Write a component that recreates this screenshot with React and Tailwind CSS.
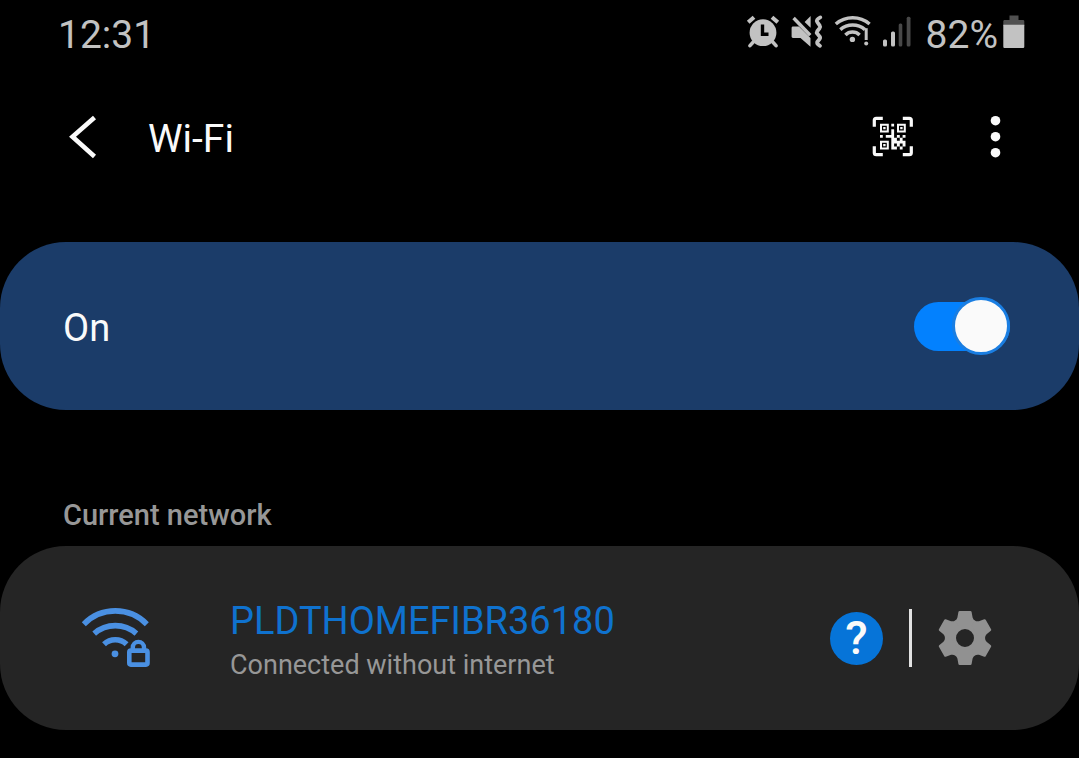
import { useState } from 'react';

const AlarmIcon = () => (
  <svg width="34" height="38" viewBox="0 0 34 38" fill="none" stroke="#c2c2c2" aria-hidden="true">
    <circle cx="17" cy="18.7" r="13.4" fill="#c2c2c2" stroke="none" />
    <path d="M2.2 8.3L8 3.2M26 3.2L31.8 8.3" strokeWidth="4" />
    <path d="M4 31.6L7.5 27.8M30 31.6L26.5 27.8" strokeWidth="3.6" strokeLinecap="round" />
    <path d="M16.5 10.5V20.2H22.5" stroke="#000" strokeWidth="3.4" />
  </svg>
);

const VibrateIcon = () => (
  <svg width="34" height="38" viewBox="0 0 34 38" fill="none" stroke="#c2c2c2" aria-hidden="true">
    <path d="M3 12.5H9L20.5 24V32.8L10.5 24H3C2.2 24 1.6 23.4 1.6 22.6V13.9C1.6 13.1 2.2 12.5 3 12.5Z" fill="#c2c2c2" stroke="none" />
    <path d="M14.6 8L20.6 2V13.8Z" fill="#c2c2c2" stroke="none" />
    <path d="M3.6 4L20.2 21.2" strokeWidth="3.4" />
    <path
      d="M30.3 3.4Q25.6 5.7 27.2 8L29.6 11.3Q30.6 12.8 29.6 14.2L27.2 17.2Q26.4 18.4 27.2 19.6L29.6 22.4Q30.6 23.8 29.6 25L27.2 28Q26.6 29.8 30 31.8"
      strokeWidth="3.8"
      strokeLinejoin="round"
      strokeLinecap="round"
    />
  </svg>
);

const WifiStatusIcon = () => (
  <svg width="38" height="38" viewBox="0 0 38 38" fill="none" stroke="#c2c2c2" strokeWidth="3.5" aria-hidden="true">
    <path d="M1.8 10A26 26 0 0 1 35.6 10" />
    <path d="M6.3 15.6A19 19 0 0 1 31 15.6" />
    <path d="M11.4 21A10 10 0 0 1 25.6 21" />
    <circle cx="18.4" cy="25.4" r="2.7" fill="#c2c2c2" stroke="none" />
    <path d="M32.2 14.2V26" strokeWidth="3" />
    <circle cx="32.2" cy="29.6" r="2" fill="#c2c2c2" stroke="none" />
  </svg>
);

const SignalIcon = () => (
  <svg width="30" height="38" viewBox="0 0 30 38" fill="#c2c2c2" aria-hidden="true">
    <rect x="1" y="25.5" width="4" height="7" rx="1.5" />
    <rect x="9" y="17.5" width="4" height="15" rx="1.5" />
    <rect x="16.7" y="9.5" width="3.6" height="23" rx="1.5" fill="#484848" />
    <rect x="24.7" y="2.7" width="3.8" height="29.8" rx="1.5" fill="#484848" />
  </svg>
);

const BatteryIcon = () => (
  <svg width="22" height="38" viewBox="0 0 22 38" aria-hidden="true">
    <path d="M6.5 1.5H15.5V6H20C20.8 6 21.3 6.6 21.3 7.3V12H.3V7.3C.3 6.6 .8 6 1.6 6H6.5Z" fill="#505050" />
    <path d="M.3 10.8H21.3V32.4C21.3 33.3 20.7 34 19.8 34H1.8C.9 34 .3 33.3 .3 32.4Z" fill="#c2c2c2" />
  </svg>
);

const QrScanIcon = () => (
  <svg width="44" height="44" viewBox="0 0 44 44" fill="none" stroke="#fafafa" aria-hidden="true">
    <path
      d="M3.3 11.8V5.3A2 2 0 0 1 5.3 3.3H11.8M31.8 3.3H38.3A2 2 0 0 1 40.3 5.3V11.8M40.3 31.2V37.7A2 2 0 0 1 38.3 39.7H31.8M11.8 39.7H5.3A2 2 0 0 1 3.3 37.7V31.2"
      strokeWidth="3.2"
    />
    <path d="M10 9.8H16.8V16.4H10ZM27 9.8H33.8V16.4H27ZM10 26.8H16.8V33.4H10Z" strokeWidth="2" />
    <path
      d="M12.2 12h2.4v2.2h-2.4zM29.2 12h2.4v2.2h-2.4zM12.2 29h2.4v2.2h-2.4zM20.3 8.8h2.8v2.8h-2.8zM20.3 14.2h2.8v5.8h-2.8zM9 20h2.8v2.8h-2.8zM14.8 20h5.6v2.8h-5.6zM20.3 20h2.8v5.8h-2.8zM20.3 28h2.8v6.4h-2.8zM23 22.8h2.9v2.9h-2.9zM25.9 20h2.9v2.8h-2.9zM31.6 20h2.9v2.8h-2.9zM28.8 22.8h2.8v2.9h-2.8zM20.3 25.7h8.5v2.9h-8.5zM28.8 25.7h5.7v2.9h-5.7zM25.9 28.5h2.9v2.9h-2.9zM23 31.4h2.9v3h-2.9zM28.8 31.4h2.8v3h-2.8zM31.6 28.5h2.9v2.9h-2.9z"
      fill="#fafafa"
      stroke="none"
    />
  </svg>
);

const SecureWifiIcon = () => (
  <svg
    width="72"
    height="66"
    viewBox="0 0 72 66"
    fill="none"
    stroke="#4a90e2"
    strokeWidth="5.6"
    className="shrink-0"
    aria-hidden="true"
  >
    <path d="M3.8 19.2A44 44 0 0 1 66.8 19.2" />
    <path d="M14.2 28.6A32 32 0 0 1 56.4 28.6" />
    <path d="M24 39.2A16.5 16.5 0 0 1 46.6 39.2" />
    <circle cx="35" cy="48.8" r="3.4" fill="#4a90e2" stroke="none" />
    <rect x="49.3" y="45.6" width="18.2" height="14" rx="1.5" strokeWidth="4.6" />
    <path d="M52.8 45V42.5A5.6 5.6 0 0 1 64 42.5V45" strokeWidth="4.4" />
  </svg>
);

const GearIcon = () => (
  <svg width="54" height="56" viewBox="-27 -28 54 56" fill="#919191" aria-hidden="true">
    <circle r="14.2" fill="none" stroke="#919191" strokeWidth="10.4" />
    {[0, 60, 120, 180, 240, 300].map((angle) => (
      <path
        key={angle}
        d="M-5.4 -27H5.4Q6.4 -27 6.6 -26L7.6 -20.5Q8 -18.5 10.5 -17L6 -12H-6L-10.5 -17Q-8 -18.5 -7.6 -20.5L-6.6 -26Q-6.4 -27 -5.4 -27Z"
        transform={`rotate(${angle})`}
      />
    ))}
  </svg>
);

const StatusBar = () => (
  <div className="flex h-[66px] items-center justify-between pl-[58px] pr-[54px] text-[39px] leading-[48px] text-[#c2c2c2]">
    <span className="pt-[3px]">12:31</span>
    <div className="flex items-center gap-[14px]">
      <div className="flex items-center gap-[10px]">
        <AlarmIcon />
        <VibrateIcon />
        <WifiStatusIcon />
        <SignalIcon />
      </div>
      <div className="flex items-center gap-[5px]">
        <span className="pt-[3px]">82%</span>
        <BatteryIcon />
      </div>
    </div>
  </div>
);

const Toolbar = () => (
  <header className="flex h-[142px] items-center pl-[68px] pr-[77px]">
    <button type="button" aria-label="Back">
      <svg width="30" height="44" viewBox="0 0 30 44" fill="none" stroke="#fafafa" strokeWidth="4.6">
        <path d="M26.5 2.5L4.5 21.8L26.5 41.5" />
      </svg>
    </button>
    <h1 className="ml-[50px] flex-1 pt-[3px] text-[39px] leading-[48px] text-[#fafafa]">Wi-Fi</h1>
    <div className="flex items-center gap-[75px]">
      <button type="button" aria-label="Scan QR code">
        <QrScanIcon />
      </button>
      <button type="button" aria-label="More options">
        <svg width="12" height="44" viewBox="0 0 12 44" fill="#fafafa">
          <circle cx="5.5" cy="5.7" r="4.8" />
          <circle cx="5.5" cy="21.7" r="4.8" />
          <circle cx="5.5" cy="37.7" r="4.8" />
        </svg>
      </button>
    </div>
  </header>
);

const App = () => {
  const [enabled, setEnabled] = useState(true);

  return (
    <div className="min-h-screen bg-black font-[Roboto,sans-serif]">
      <StatusBar />
      <Toolbar />

      <main className="mt-[34px]">
        <div className="flex h-[168px] items-center justify-between rounded-[66px] bg-[#1b3c69] pl-[63px] pr-[69px]">
          <label htmlFor="wifi-switch" className="pt-[3px] text-[38px] leading-[48px] text-[#fafafa]">
            {enabled ? 'On' : 'Off'}
          </label>
          <input
            id="wifi-switch"
            type="checkbox"
            role="switch"
            checked={enabled}
            onChange={(e) => setEnabled(e.target.checked)}
            className="flex h-[49px] w-24 cursor-pointer appearance-none items-center rounded-full bg-[#5c6b80] before:size-[58px] before:shrink-0 before:rounded-full before:border-[3px] before:border-[#8492a6] before:bg-[#fafafa] checked:justify-end checked:bg-[#0381fe] checked:before:border-[#1a7ee2]"
          />
        </div>

        <section className="mt-[85px]">
          <h2 className="mb-[11px] pl-[63px] text-[29px] font-medium leading-[40px] text-[#979797]">
            Current network
          </h2>
          <div className="flex h-[184px] items-center rounded-[66px] bg-[#252525] pl-20 pr-[87px]">
            <SecureWifiIcon />
            <div className="ml-[78px] flex-1 pt-[2px]">
              <p className="text-[38px] leading-[52px] text-[#0f72cf]">PLDTHOMEFIBR36180</p>
              <p className="text-[27px] leading-[36px] text-[#979797]">Connected without internet</p>
            </div>
            <div className="flex items-center gap-[26px]">
              <button
                type="button"
                aria-label="Help"
                className="size-[53px] rounded-full bg-[#0674d8] text-center text-[46px] font-medium leading-[52px] text-[#fafafa]"
              >
                ?
              </button>
              <span className="h-[58px] w-[3px] bg-[#e2e2e2]" />
              <button type="button" aria-label="Network settings">
                <GearIcon />
              </button>
            </div>
          </div>
        </section>
      </main>
    </div>
  );
};

export default App;
